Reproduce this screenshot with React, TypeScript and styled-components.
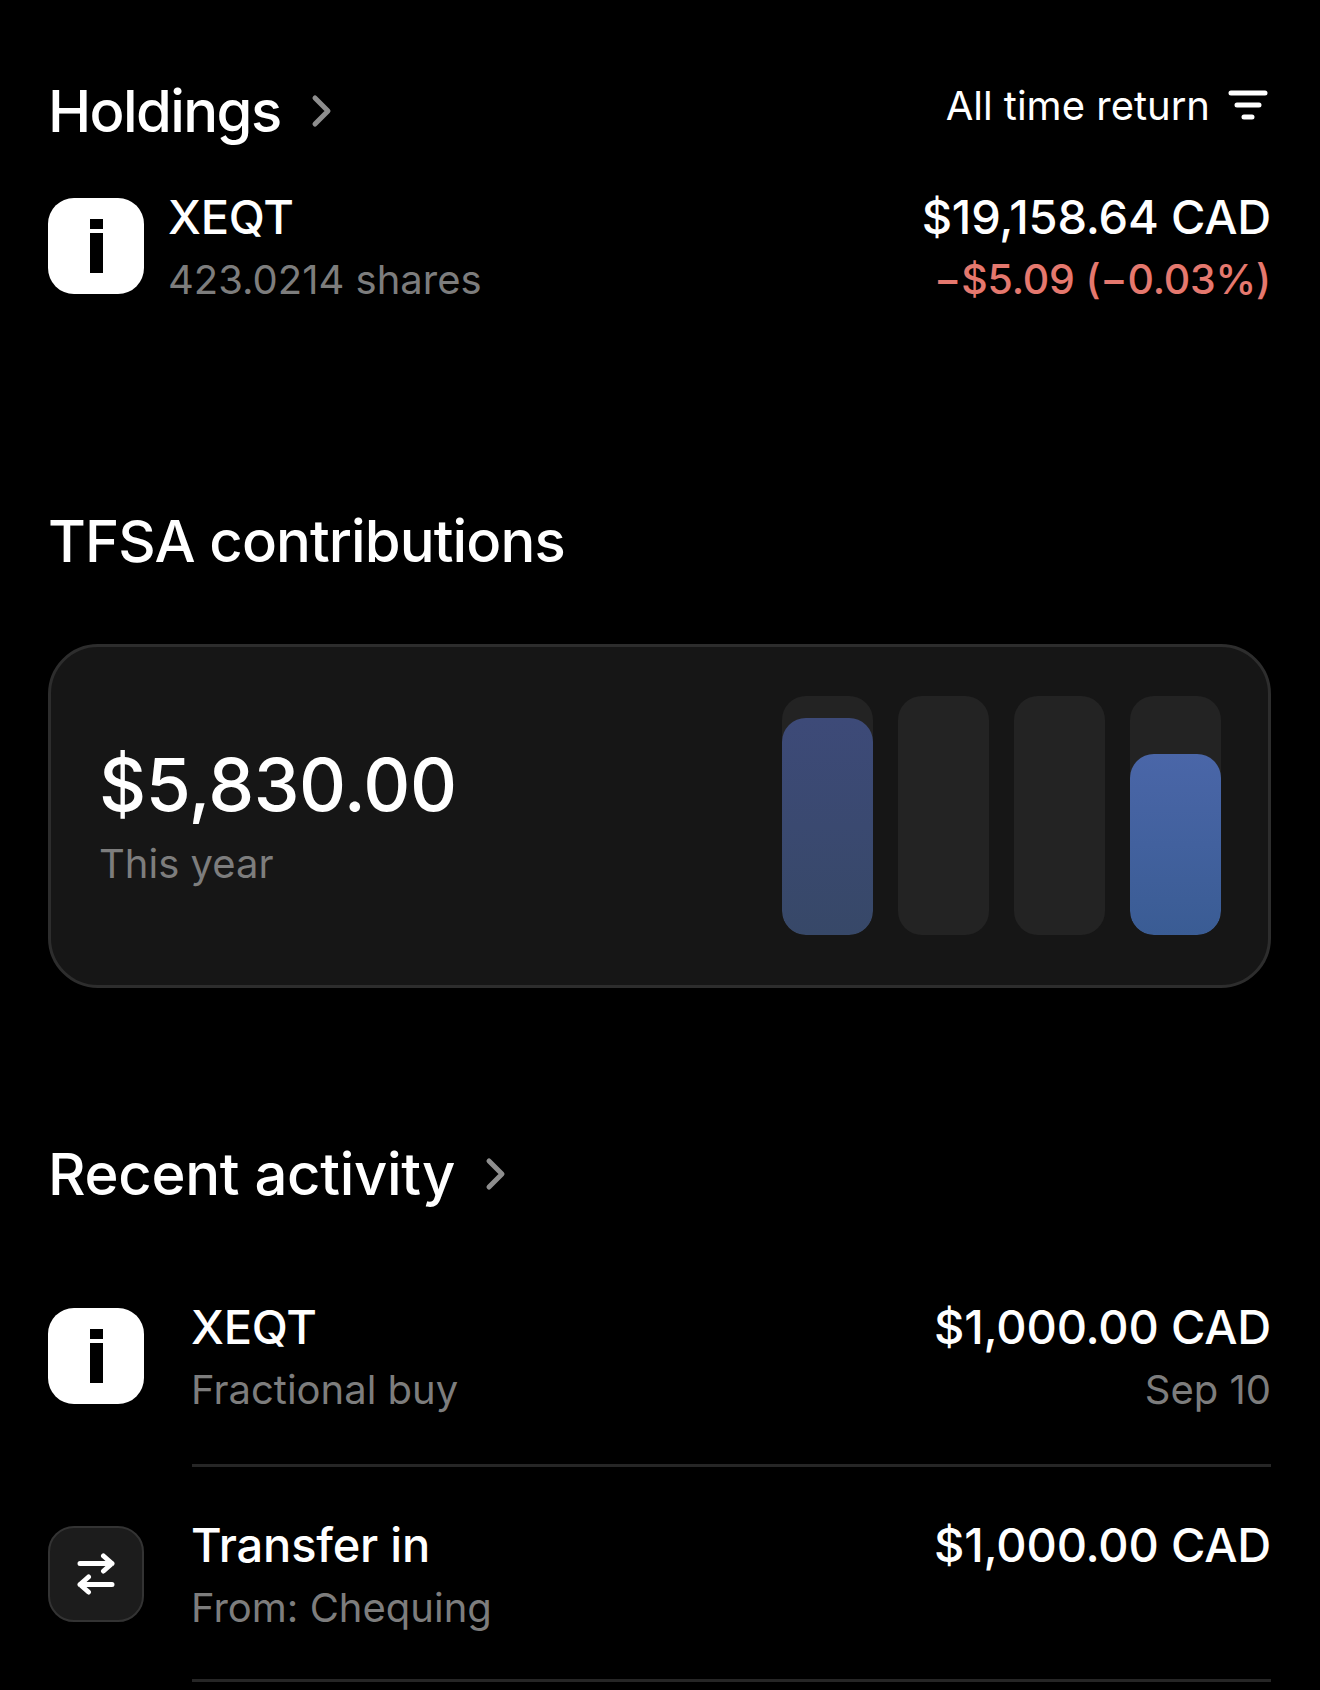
import React from "react";
import styled, { createGlobalStyle } from "styled-components";

const GlobalStyle = createGlobalStyle`
  html, body {
    margin: 0;
    padding: 0;
    background: #000;
  }
`;

const Root = styled.div`
  box-sizing: border-box;
  width: 1320px;
  height: 1690px;
  overflow: hidden;
  padding: 78px 49px 0 48px;
  background: #000;
  color: #fff;
  font-family: Inter, "Noto Sans", sans-serif;
`;

const SectionHeader = styled.div`
  display: flex;
  align-items: center;
  justify-content: space-between;
  height: 66px;
`;

const TitleGroup = styled.div`
  display: flex;
  align-items: center;
  gap: 30px;
`;

const Title = styled.h2<{ $tracking: number }>`
  margin: 0;
  font-size: 58px;
  line-height: 66px;
  font-weight: 500;
  letter-spacing: ${(p) => p.$tracking}px;
`;

const Chevron = styled.svg`
  width: 22px;
  height: 34px;
  fill: none;
  stroke: #8e8e8e;
  stroke-width: 5;
  stroke-linecap: round;
  stroke-linejoin: round;
`;

const SortButton = styled.div`
  display: flex;
  align-items: center;
  gap: 18px;
  margin: -10px 3px 0 0;
  font-size: 40px;
  line-height: 50px;
`;

const HoldingRow = styled.div`
  display: flex;
  align-items: center;
  justify-content: space-between;
  margin-top: 40px;
`;

const LeftGroup = styled.div<{ $gap: number }>`
  display: flex;
  align-items: center;
  gap: ${(p) => p.$gap}px;
`;

const Logo = styled.div<{ $dark?: boolean }>`
  box-sizing: border-box;
  display: flex;
  align-items: center;
  justify-content: center;
  flex: none;
  width: 96px;
  height: 96px;
  border-radius: 26px;
  background: ${(p) => (p.$dark ? "#1c1c1c" : "#fff")};
  border: ${(p) => (p.$dark ? "2px solid #333" : "none")};
`;

const TextStack = styled.div<{ $right?: boolean }>`
  display: flex;
  flex-direction: column;
  gap: 8px;
  margin-top: 5px;
  align-items: ${(p) => (p.$right ? "flex-end" : "flex-start")};
`;

const Primary = styled.div`
  font-size: 47px;
  line-height: 55px;
  font-weight: 500;
  letter-spacing: -0.2px;
  white-space: nowrap;
`;

const Secondary = styled.div<{ $negative?: boolean }>`
  font-size: ${(p) => (p.$negative ? 41 : 40)}px;
  line-height: 55px;
  color: ${(p) => (p.$negative ? "#e5786e" : "#7d7d7d")};
  font-weight: ${(p) => (p.$negative ? 500 : 400)};
  letter-spacing: ${(p) => (p.$negative ? "-0.2px" : "0")};
  white-space: nowrap;
`;

const ContributionsHeader = styled(SectionHeader)`
  margin-top: 201px;
`;

const Card = styled.div`
  box-sizing: border-box;
  display: flex;
  align-items: center;
  justify-content: space-between;
  height: 344px;
  margin-top: 70px;
  padding: 0 47px 0 48px;
  background: #161616;
  border: 3px solid #2d2d2d;
  border-radius: 50px;
`;

const CardAmount = styled.div`
  font-size: 73px;
  line-height: 84px;
  font-weight: 500;
  letter-spacing: -0.5px;
`;

const CardLabel = styled.div`
  margin-top: 12px;
  font-size: 40px;
  line-height: 50px;
  color: #7d7d7d;
`;

const Bars = styled.div`
  display: flex;
  gap: 25px;
  margin-bottom: 2px;
`;

const BarTrack = styled.div`
  display: flex;
  align-items: flex-end;
  width: 91px;
  height: 239px;
  border-radius: 24px;
  background: #232323;
  overflow: hidden;
`;

const BarFill = styled.div<{ $height: number; $bright?: boolean }>`
  width: 100%;
  height: ${(p) => p.$height}px;
  border-radius: 24px;
  background: ${(p) =>
    p.$bright
      ? "linear-gradient(180deg, #4a66a8 0%, #3a5c94 100%)"
      : "linear-gradient(180deg, #3d4a78 0%, #374868 100%)"};
`;

const ActivityHeader = styled(SectionHeader)`
  margin-top: 153px;
`;

const ActivityList = styled.div`
  margin-top: 87px;
`;

const ActivityItem = styled.div`
  display: flex;
  flex-direction: column;
`;

const Divider = styled.div<{ $gap: number }>`
  height: 3px;
  margin: ${(p) => p.$gap}px 0 0 144px;
  background: #262626;
`;

const ActivityRow = styled(HoldingRow)`
  margin-top: 0;
  align-items: flex-start;
`;

const NextActivity = styled(ActivityItem)`
  margin-top: 45px;
`;

const IMark = () => (
  <svg width="13" height="54" viewBox="0 0 13 54" fill="#000">
    <rect x="0" y="0" width="13" height="10" />
    <rect x="0" y="14" width="13" height="40" />
  </svg>
);

const TransferIcon = () => (
  <svg
    width="38"
    height="42"
    viewBox="0 0 38 42"
    fill="none"
    stroke="#fff"
    strokeWidth="5"
    strokeLinecap="round"
    strokeLinejoin="round"
  >
    <path d="M3 10.5h32M26.5 3l8.5 7.5-8.5 7.5" />
    <path d="M35 31.5H3M11.5 24L3 31.5l8.5 7.5" />
  </svg>
);

const FilterIcon = () => (
  <svg width="40" height="32" viewBox="0 0 40 32" fill="none" stroke="#fff" strokeWidth="5" strokeLinecap="round">
    <path d="M3 3h34M9 15h22M16 27h8" />
  </svg>
);

const ChevronRight = () => (
  <Chevron viewBox="0 0 22 34">
    <path d="M4 4l13 13L4 30" />
  </Chevron>
);

export default function App() {
  return (
    <Root>
      <GlobalStyle />
      <SectionHeader>
        <TitleGroup>
          <Title $tracking={-1.6}>Holdings</Title>
          <ChevronRight />
        </TitleGroup>
        <SortButton>
          All time return
          <FilterIcon />
        </SortButton>
      </SectionHeader>
      <HoldingRow>
        <LeftGroup $gap={24}>
          <Logo>
            <IMark />
          </Logo>
          <TextStack>
            <Primary>XEQT</Primary>
            <Secondary>423.0214 shares</Secondary>
          </TextStack>
        </LeftGroup>
        <TextStack $right>
          <Primary>$19,158.64 CAD</Primary>
          <Secondary $negative>−$5.09 (−0.03%)</Secondary>
        </TextStack>
      </HoldingRow>

      <ContributionsHeader>
        <Title $tracking={-0.9}>TFSA contributions</Title>
      </ContributionsHeader>
      <Card>
        <div>
          <CardAmount>$5,830.00</CardAmount>
          <CardLabel>This year</CardLabel>
        </div>
        <Bars>
          <BarTrack>
            <BarFill $height={217} />
          </BarTrack>
          <BarTrack />
          <BarTrack />
          <BarTrack>
            <BarFill $height={181} $bright />
          </BarTrack>
        </Bars>
      </Card>

      <ActivityHeader>
        <TitleGroup>
          <Title $tracking={-0.3}>Recent activity</Title>
          <ChevronRight />
        </TitleGroup>
      </ActivityHeader>
      <ActivityList>
        <ActivityItem>
          <ActivityRow>
            <LeftGroup $gap={47}>
              <Logo>
                <IMark />
              </Logo>
              <TextStack>
                <Primary>XEQT</Primary>
                <Secondary>Fractional buy</Secondary>
              </TextStack>
            </LeftGroup>
            <TextStack $right>
              <Primary>$1,000.00 CAD</Primary>
              <Secondary>Sep 10</Secondary>
            </TextStack>
          </ActivityRow>
          <Divider $gap={47} />
        </ActivityItem>
        <NextActivity>
          <ActivityRow>
            <LeftGroup $gap={47}>
              <Logo $dark>
                <TransferIcon />
              </Logo>
              <TextStack>
                <Primary>Transfer in</Primary>
                <Secondary>From: Chequing</Secondary>
              </TextStack>
            </LeftGroup>
            <TextStack $right>
              <Primary>$1,000.00 CAD</Primary>
            </TextStack>
          </ActivityRow>
          <Divider $gap={44} />
        </NextActivity>
      </ActivityList>
    </Root>
  );
}
